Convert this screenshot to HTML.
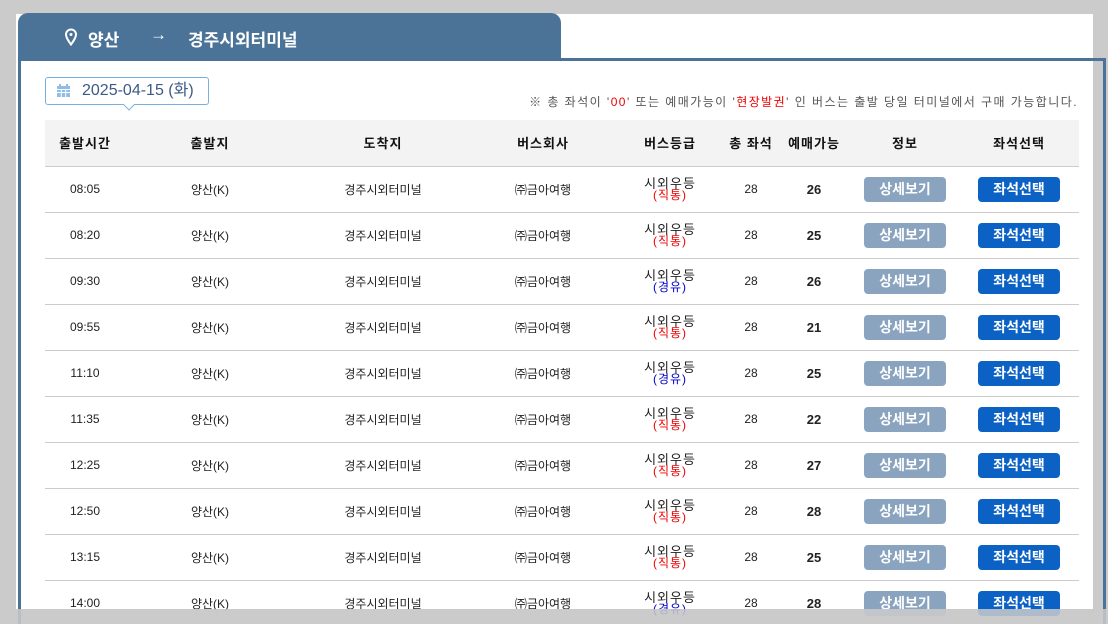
<!DOCTYPE html>
<html><head><meta charset="utf-8"><style>
*{margin:0;padding:0;box-sizing:border-box}
html{width:1108px;height:624px;overflow:hidden}
body{width:1108px;height:624px;background:#cbcbcb;position:relative;overflow:hidden;font-family:"Liberation Sans","Noto Sans CJK KR","NanumGothic",sans-serif;color:#222}
.page{position:absolute;left:16px;top:14px;width:1077px;height:595px;background:#fff}
.tab{position:absolute;left:18px;top:13px;width:543px;height:48px;background:#4a7397;border-radius:10px 10px 0 0;color:#fff;font-size:17px;font-weight:bold}
.box{position:absolute;left:18px;top:58px;width:1088px;height:566px;border:3px solid #4a7397;border-bottom:none}
.date{position:absolute;left:45px;top:77px;width:164px;height:28px;border:1px solid #7ab0e0;border-radius:3px;background:#fff;font-size:16px;color:#3d5a85;line-height:26px;padding-left:36px}
.date:after{content:"";position:absolute;left:79px;bottom:-5px;width:7px;height:7px;background:#fff;border-right:1px solid #7ab0e0;border-bottom:1px solid #7ab0e0;transform:rotate(45deg)}
.note{position:absolute;right:30px;top:93px;font-size:12px;color:#555;letter-spacing:1.45px;white-space:nowrap}
.note b{color:#e00;font-weight:normal}
table{position:absolute;left:45px;top:120px;width:1034px;border-collapse:collapse;table-layout:fixed}
th{height:46px;background:#f3f3f3;font-size:13px;font-weight:bold;border-bottom:1px solid #ccc;color:#111;letter-spacing:1px}
td{height:46px;border-bottom:1px solid #ccc;text-align:center;font-size:12px;color:#222}
.g{font-size:13px;line-height:11px;display:inline-block;margin-top:2px;letter-spacing:1px}
.g span{font-size:12px;letter-spacing:1px}
.r{color:#e00}.bl{color:#00c}
.n{font-weight:bold;font-size:13px}
.b1,.b2{display:inline-block;width:82px;height:25px;line-height:25px;border-radius:4px;color:#fff;font-weight:bold;font-size:14px}
.b1{background:#8aa4bf}.b2{background:#0b62c4}
.ov{position:absolute;left:0;top:609px;width:1108px;height:15px;background:rgba(203,203,203,0.85)}
</style></head><body>
<div class="page"></div>
<div class="box"></div>
<div class="tab">
<svg style="position:absolute;left:46px;top:15px" width="14" height="18" viewBox="0 0 14 18"><path d="M7 1.5a5 5 0 0 0-5 5c0 3.5 5 10 5 10s5-6.5 5-10a5 5 0 0 0-5-5z" fill="none" stroke="#fff" stroke-width="2"/><circle cx="7" cy="6.5" r="1.5" fill="#fff"/></svg>
<span style="position:absolute;left:70px;top:13px">양산</span>
<span style="position:absolute;left:132px;top:12px">&#x2192;</span>
<span style="position:absolute;left:170px;top:13px">경주시외터미널</span>
</div>
<div class="date"><svg style="position:absolute;left:11px;top:6px" width="13" height="13" viewBox="0 0 13 13"><rect x="0" y="2" width="13" height="11" fill="#8fbde8"/><rect x="2" y="0" width="2" height="3" fill="#8fbde8"/><rect x="9" y="0" width="2" height="3" fill="#8fbde8"/><path d="M0 5.5H13M0 8.5H13M4.3 5V13M8.7 5V13" stroke="#fff" stroke-width="1"/></svg>2025-04-15 (화)</div>
<div class="note">※ 총 좌석이 '<b>00</b>' 또는 예매가능이 '<b>현장발권</b>' 인 버스는 출발 당일 터미널에서 구매 가능합니다.</div>
<table>
<colgroup><col style="width:80px"><col style="width:170px"><col style="width:176px"><col style="width:144px"><col style="width:110px"><col style="width:52px"><col style="width:74px"><col style="width:108px"><col style="width:120px"></colgroup>
<tr><th>출발시간</th><th>출발지</th><th>도착지</th><th>버스회사</th><th>버스등급</th><th>총 좌석</th><th>예매가능</th><th>정보</th><th>좌석선택</th></tr>
<tr><td>08:05</td><td>양산(K)</td><td>경주시외터미널</td><td>㈜금아여행</td><td><span class="g">시외우등<br><span class="r">(직통)</span></span></td><td>28</td><td class="n">26</td><td><span class="b1">상세보기</span></td><td><span class="b2">좌석선택</span></td></tr>
<tr><td>08:20</td><td>양산(K)</td><td>경주시외터미널</td><td>㈜금아여행</td><td><span class="g">시외우등<br><span class="r">(직통)</span></span></td><td>28</td><td class="n">25</td><td><span class="b1">상세보기</span></td><td><span class="b2">좌석선택</span></td></tr>
<tr><td>09:30</td><td>양산(K)</td><td>경주시외터미널</td><td>㈜금아여행</td><td><span class="g">시외우등<br><span class="bl">(경유)</span></span></td><td>28</td><td class="n">26</td><td><span class="b1">상세보기</span></td><td><span class="b2">좌석선택</span></td></tr>
<tr><td>09:55</td><td>양산(K)</td><td>경주시외터미널</td><td>㈜금아여행</td><td><span class="g">시외우등<br><span class="r">(직통)</span></span></td><td>28</td><td class="n">21</td><td><span class="b1">상세보기</span></td><td><span class="b2">좌석선택</span></td></tr>
<tr><td>11:10</td><td>양산(K)</td><td>경주시외터미널</td><td>㈜금아여행</td><td><span class="g">시외우등<br><span class="bl">(경유)</span></span></td><td>28</td><td class="n">25</td><td><span class="b1">상세보기</span></td><td><span class="b2">좌석선택</span></td></tr>
<tr><td>11:35</td><td>양산(K)</td><td>경주시외터미널</td><td>㈜금아여행</td><td><span class="g">시외우등<br><span class="r">(직통)</span></span></td><td>28</td><td class="n">22</td><td><span class="b1">상세보기</span></td><td><span class="b2">좌석선택</span></td></tr>
<tr><td>12:25</td><td>양산(K)</td><td>경주시외터미널</td><td>㈜금아여행</td><td><span class="g">시외우등<br><span class="r">(직통)</span></span></td><td>28</td><td class="n">27</td><td><span class="b1">상세보기</span></td><td><span class="b2">좌석선택</span></td></tr>
<tr><td>12:50</td><td>양산(K)</td><td>경주시외터미널</td><td>㈜금아여행</td><td><span class="g">시외우등<br><span class="r">(직통)</span></span></td><td>28</td><td class="n">28</td><td><span class="b1">상세보기</span></td><td><span class="b2">좌석선택</span></td></tr>
<tr><td>13:15</td><td>양산(K)</td><td>경주시외터미널</td><td>㈜금아여행</td><td><span class="g">시외우등<br><span class="r">(직통)</span></span></td><td>28</td><td class="n">25</td><td><span class="b1">상세보기</span></td><td><span class="b2">좌석선택</span></td></tr>
<tr><td>14:00</td><td>양산(K)</td><td>경주시외터미널</td><td>㈜금아여행</td><td><span class="g">시외우등<br><span class="bl">(경유)</span></span></td><td>28</td><td class="n">28</td><td><span class="b1">상세보기</span></td><td><span class="b2">좌석선택</span></td></tr>
</table>
<div class="ov"></div>
</body></html>
